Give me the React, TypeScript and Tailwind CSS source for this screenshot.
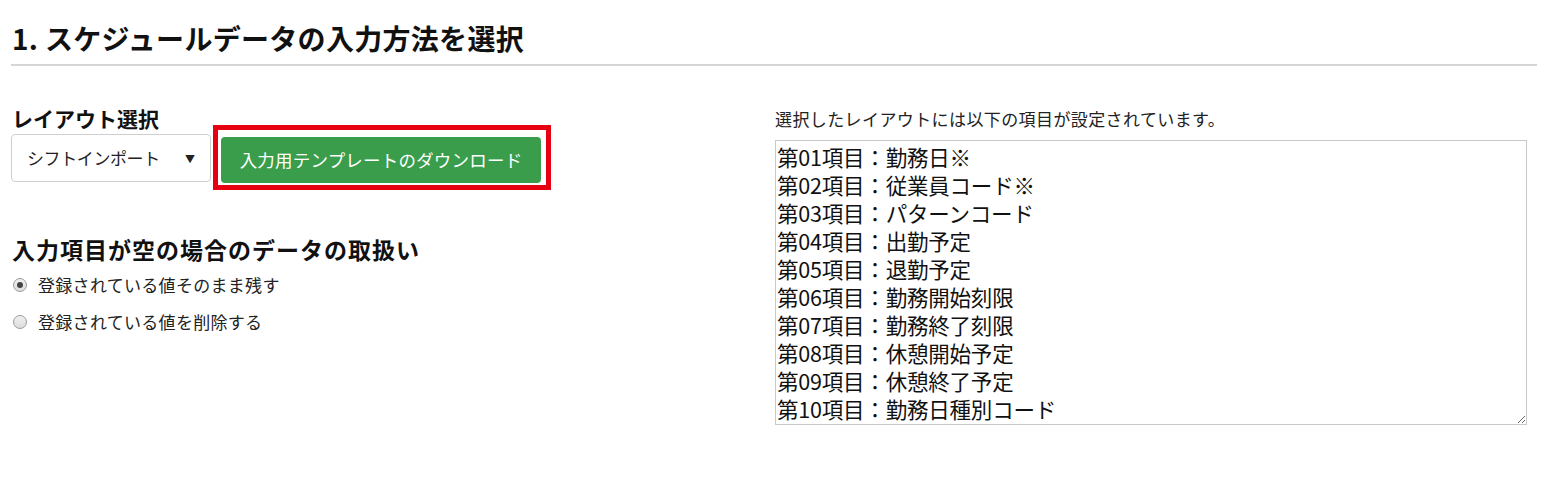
const FONT = "font-['Noto_Sans_CJK_JP','Noto_Sans',sans-serif]";

const ITEMS = [
  "第01項目：勤務日※",
  "第02項目：従業員コード※",
  "第03項目：パターンコード",
  "第04項目：出勤予定",
  "第05項目：退勤予定",
  "第06項目：勤務開始刻限",
  "第07項目：勤務終了刻限",
  "第08項目：休憩開始予定",
  "第09項目：休憩終了予定",
  "第10項目：勤務日種別コード",
];

function Radio({ checked, label }: { checked?: boolean; label: string }) {
  return (
    <label className="flex items-center gap-[11px] h-[37px]">
      <span className="ml-[13px] flex h-[14px] w-[14px] items-center justify-center rounded-full border border-[#9c9c9c] bg-gradient-to-b from-[#f0f0f0] to-[#dcdcdc]">
        {checked && <span className="h-[6px] w-[6px] rounded-full bg-[#444]" />}
      </span>
      <span className="text-[17px] leading-none tracking-[0.3px] text-[#222]">{label}</span>
    </label>
  );
}

export default function App() {
  return (
    <div className={`${FONT} h-[487px] w-[1568px] bg-white pl-[11px] pr-[31px] text-[#111]`}>
      <div className="border-b-2 border-[#d6d6d6] pt-[21px] pb-[9px]">
        <h1 className="pl-[1px] text-[28px] font-bold leading-[34px] tracking-[0.3px]">
          1. スケジュールデータの入力方法を選択
        </h1>
      </div>

      <div className="flex pt-[39px]">
        <div className="w-[764px]">
          <div className="pl-[1px] text-[21px] font-bold leading-[26px]">レイアウト選択</div>
          <div className="mt-[3px] flex items-start gap-[10px]">
            <div className="flex h-[48px] w-[200px] items-center justify-between rounded-[4px] border border-[#cfcfcf] pl-[15px] pr-[15px]">
              <span className="text-[17px] tracking-[-0.4px] text-[#222]">シフトインポート</span>
              <span className="text-[10px] text-[#222]">▼</span>
            </div>
            <div className="relative mt-[3px]">
              <span className="pointer-events-none absolute -left-[8px] -right-[10px] -top-[12px] -bottom-[7px] border-[5px] border-[#e60012]" />
              <button className="flex h-[46px] w-[320px] items-center justify-center rounded-[4px] bg-[#3a9d4b] text-[17.5px] tracking-[0.2px] text-white">
                入力用テンプレートのダウンロード
              </button>
            </div>
          </div>

          <div className="mt-[51px] pl-[1px] text-[23px] font-bold leading-[30px] tracking-[1px]">
            入力項目が空の場合のデータの取扱い
          </div>
          <div className="-ml-[11px] mt-[2px] flex flex-col">
            <Radio checked label="登録されている値そのまま残す" />
            <Radio label="登録されている値を削除する" />
          </div>
        </div>

        <div className="flex-1">
          <div className="pt-[2px] text-[17px] leading-[24px] tracking-[0.4px] text-[#222]">
            選択したレイアウトには以下の項目が設定されています。
          </div>
          <textarea
            readOnly
            value={ITEMS.join("\n")}
            className={`${FONT} mt-[9px] h-[285px] w-[752px] border border-[#c9c9c9] px-[1px] pt-[2px] text-[21.5px] leading-[28px] tracking-[-0.2px] text-[#111] outline-none`}
          />
        </div>
      </div>
    </div>
  );
}
